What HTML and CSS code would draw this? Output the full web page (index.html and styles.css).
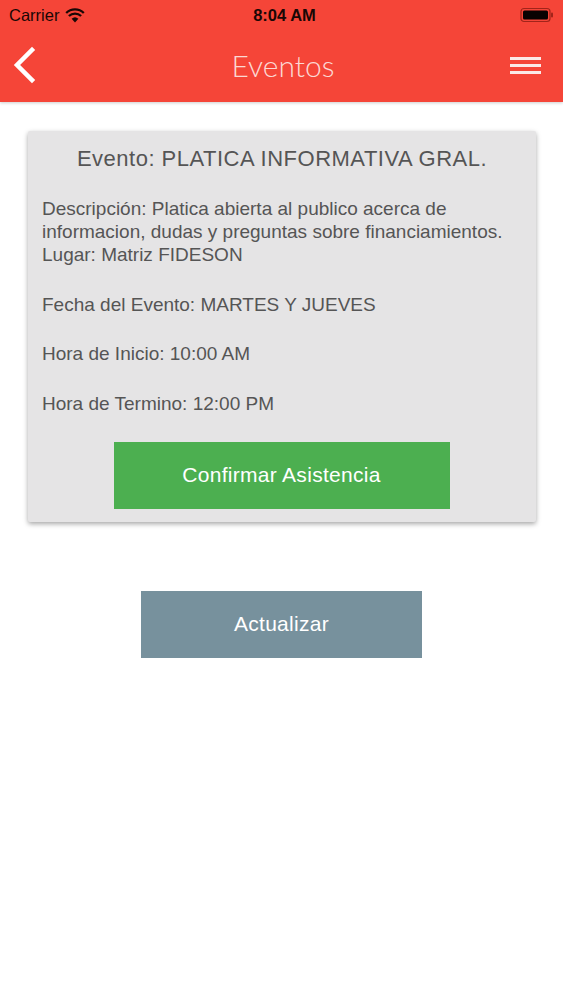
FILE: index.html
```html
<!DOCTYPE html>
<html>
<head>
    <title>Eventos</title>
    <link rel="stylesheet" href="styles.css">
</head>
<body>
    <div class="top-bar">
        <div class="status-bar">
            <div class="status-left">
                <span>Carrier</span>
                <svg class="wifi" width="20" height="15" viewBox="0 0 20 15">
                    <path d="M10 14.5 L6.6 10.8 A5 5 0 0 1 13.4 10.8 Z" fill="#1a0705"/>
                    <path d="M3.9 8 A8.8 8.8 0 0 1 16.1 8" fill="none" stroke="#1a0705" stroke-width="2.3"/>
                    <path d="M1.2 5 A12.6 12.6 0 0 1 18.8 5" fill="none" stroke="#1a0705" stroke-width="2.3"/>
                </svg>
            </div>
            <div class="status-time">8:04 AM</div>
            <div class="status-right">
                <svg width="34" height="16" viewBox="0 0 34 16">
                    <rect x="1" y="1.5" width="29" height="13" rx="3" fill="none" stroke="#a1241a" stroke-width="1.2"/>
                    <rect x="3" y="3.5" width="25" height="9" rx="1.5" fill="#0a0202"/>
                    <rect x="31" y="5.5" width="2" height="5" rx="1" fill="#a1241a"/>
                </svg>
            </div>
        </div>
        <div class="nav-bar">
            <svg class="back" width="30" height="40" viewBox="0 0 30 40">
                <path d="M22 5 L7 20 L22 35" fill="none" stroke="#fff" stroke-width="4.5" stroke-linecap="square"/>
            </svg>
            <h1 class="nav-title">Eventos</h1>
            <div class="menu">
                <span></span>
                <span></span>
                <span></span>
            </div>
        </div>
    </div>

    <div class="content">
        <div class="event-card">
            <h2 class="event-title">Evento: PLATICA INFORMATIVA GRAL.</h2>
            <p class="event-text">Descripción: Platica abierta al publico acerca de informacion, dudas y preguntas sobre financiamientos.<br>Lugar: Matriz FIDESON</p>
            <p class="event-text">Fecha del Evento: MARTES Y JUEVES</p>
            <p class="event-text">Hora de Inicio: 10:00 AM</p>
            <p class="event-text">Hora de Termino: 12:00 PM</p>
            <button class="confirm-button">Confirmar Asistencia</button>
        </div>

        <button class="refresh-button">Actualizar</button>
    </div>
</body>
</html>
```

FILE: styles.css
```css
body {
    margin: 0;
    background-color: #fff;
    font-family: "Liberation Sans", Arial, sans-serif;
}

.top-bar {
    background-color: #f54538;
    height: 102px;
    box-shadow: 0 1px 3px rgba(0, 0, 0, 0.2);
}

.status-bar {
    height: 30px;
    display: flex;
    align-items: center;
    justify-content: space-between;
    padding: 0 9px;
    color: #1a0705;
    font-size: 16.5px;
}

.status-left {
    display: flex;
    align-items: center;
    gap: 6px;
    width: 120px;
}

.status-time {
    font-weight: bold;
    margin-left: 6px;
}

.status-right {
    width: 120px;
    display: flex;
    justify-content: flex-end;
}

.nav-bar {
    height: 72px;
    display: flex;
    align-items: center;
    justify-content: space-between;
    padding: 0 22px 0 10px;
    margin-top: -1px;
}

.nav-title {
    margin: 0;
    font-family: Lato, sans-serif;
    font-weight: 300;
    font-size: 30px;
    color: #fcd8d3;
    padding-left: 16px;
}

.menu {
    display: flex;
    flex-direction: column;
    gap: 4px;
    width: 31px;
}

.menu span {
    display: block;
    height: 3px;
    background-color: #fbe9e7;
}

.content {
    display: flex;
    flex-direction: column;
    align-items: center;
    padding-top: 29px;
}

.event-card {
    width: 480px;
    margin-left: 1px;
    background-color: #e5e4e5;
    padding: 14.5px 14px 13px;
    box-shadow: 0 2px 5px rgba(0, 0, 0, 0.35);
    border-radius: 2px;
    display: flex;
    flex-direction: column;
}

.event-title {
    margin: 0;
    font-size: 22px;
    font-weight: normal;
    line-height: 26px;
    letter-spacing: 0.5px;
    color: #555;
    text-align: center;
}

.event-text {
    margin: 26.5px 0 0;
    font-size: 19px;
    line-height: 23px;
    color: #555;
}

.event-text:first-of-type {
    margin-top: 25.5px;
}

.confirm-button {
    align-self: center;
    margin-top: 27px;
    width: 336px;
    height: 67px;
    border: none;
    background-color: #4caf50;
    color: #fff;
    font-family: "Liberation Sans", Arial, sans-serif;
    font-size: 21px;
    letter-spacing: 0.3px;
    margin-left: -1px;
}

.refresh-button {
    margin-top: 69px;
    width: 281px;
    height: 67px;
    border: none;
    background-color: #77919d;
    color: #fff;
    font-family: "Liberation Sans", Arial, sans-serif;
    font-size: 21px;
    letter-spacing: 0.3px;
}
```
